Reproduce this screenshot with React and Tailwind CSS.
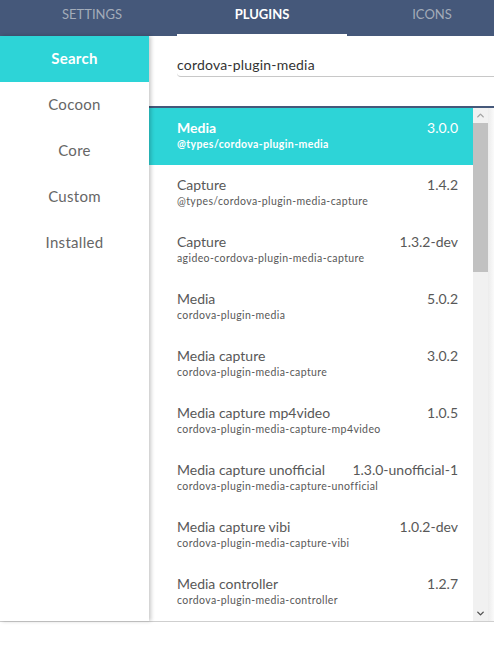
import { ChevronUp, ChevronDown } from "lucide-react";

const tabs = ["Settings", "Plugins", "Icons"];
const menu = ["Search", "Cocoon", "Core", "Custom", "Installed"];

const plugins = [
    { name: "Media", id: "@types/cordova-plugin-media", version: "3.0.0" },
    { name: "Capture", id: "@types/cordova-plugin-media-capture", version: "1.4.2" },
    { name: "Capture", id: "agideo-cordova-plugin-media-capture", version: "1.3.2-dev" },
    { name: "Media", id: "cordova-plugin-media", version: "5.0.2" },
    { name: "Media capture", id: "cordova-plugin-media-capture", version: "3.0.2" },
    { name: "Media capture mp4video", id: "cordova-plugin-media-capture-mp4video", version: "1.0.5" },
    { name: "Media capture unofficial", id: "cordova-plugin-media-capture-unofficial", version: "1.3.0-unofficial-1" },
    { name: "Media capture vibi", id: "cordova-plugin-media-capture-vibi", version: "1.0.2-dev" },
    { name: "Media controller", id: "cordova-plugin-media-controller", version: "1.2.7" },
];

export default function App() {
    const activeTab = "Plugins";
    const activeMenu = "Search";
    const selected = 0;

    return (
        <div className="flex h-[651px] w-[494px] flex-col overflow-hidden bg-white font-['Lato',sans-serif]">
            <div className="flex h-[36px] shrink-0 overflow-hidden bg-[#45587a] pl-[7px]">
                {tabs.map((tab) => (
                    <div
                        key={tab}
                        className={`flex w-[170px] shrink-0 justify-center border-b-2 pt-[6px] text-[13px] uppercase leading-[16px] ${
                            tab === activeTab
                                ? "border-white font-bold text-white"
                                : "border-transparent text-[#a3acb9]"
                        }`}
                    >
                        {tab}
                    </div>
                ))}
            </div>

            <div className="flex h-[586px] shrink-0 border-b border-[#cfcfcf]">
                <div className="relative z-10 w-[149px] shrink-0 bg-white shadow-[2px_0_4px_rgba(0,0,0,0.22)]">
                    {menu.map((item) => (
                        <div
                            key={item}
                            className={`flex h-[46px] items-center justify-center pb-[2px] text-[15px] tracking-[0.3px] ${
                                item === activeMenu
                                    ? "bg-[#2dd4d7] font-bold text-white"
                                    : "text-[#666]"
                            }`}
                        >
                            {item}
                        </div>
                    ))}
                </div>

                <div className="flex min-w-0 flex-1 flex-col">
                    <div className="h-[70px] shrink-0 pl-[28px] pt-[19px]">
                        <div className="h-[22px] rounded-bl-[4px] border-b border-[#c8c8c8] text-[14px] leading-[20px] tracking-[0.2px] text-[#333]">
                            cordova-plugin-media
                        </div>
                    </div>

                    <div className="flex min-h-0 flex-1 border-t-2 border-[#45587a]">
                        <div className="min-w-0 flex-1 overflow-hidden">
                            {plugins.map((p, i) => (
                                <div
                                    key={p.id}
                                    className={`h-[57px] pl-[28px] pr-[15px] pt-[11px] ${
                                        i === selected ? "bg-[#2dd4d7] text-white" : "text-[#585858]"
                                    }`}
                                >
                                    <div className="flex justify-between text-[14px] leading-[18px]">
                                        <span className={i === selected ? "font-bold" : ""}>{p.name}</span>
                                        <span>{p.version}</span>
                                    </div>
                                    <div
                                        className={`text-[10.5px] leading-[14px] tracking-[0.4px] ${
                                            i === selected ? "font-bold" : ""
                                        }`}
                                    >
                                        {p.id}
                                    </div>
                                </div>
                            ))}
                        </div>

                        <div className="flex w-[15px] shrink-0 flex-col bg-[#f1f1f1]">
                            <div className="flex h-[15px] items-center justify-center text-[#a3a3a3]">
                                <ChevronUp size={11} strokeWidth={3} />
                            </div>
                            <div className="h-[149px] bg-[#c1c1c1]" />
                            <div className="flex-1" />
                            <div className="flex h-[15px] items-center justify-center text-[#505050]">
                                <ChevronDown size={11} strokeWidth={3} />
                            </div>
                        </div>

                        <div className="w-[6px] shrink-0 bg-gradient-to-r from-[#ececec] to-[#fafafa]" />
                    </div>
                </div>
            </div>

            <div className="flex-1 bg-white" />
        </div>
    );
}
